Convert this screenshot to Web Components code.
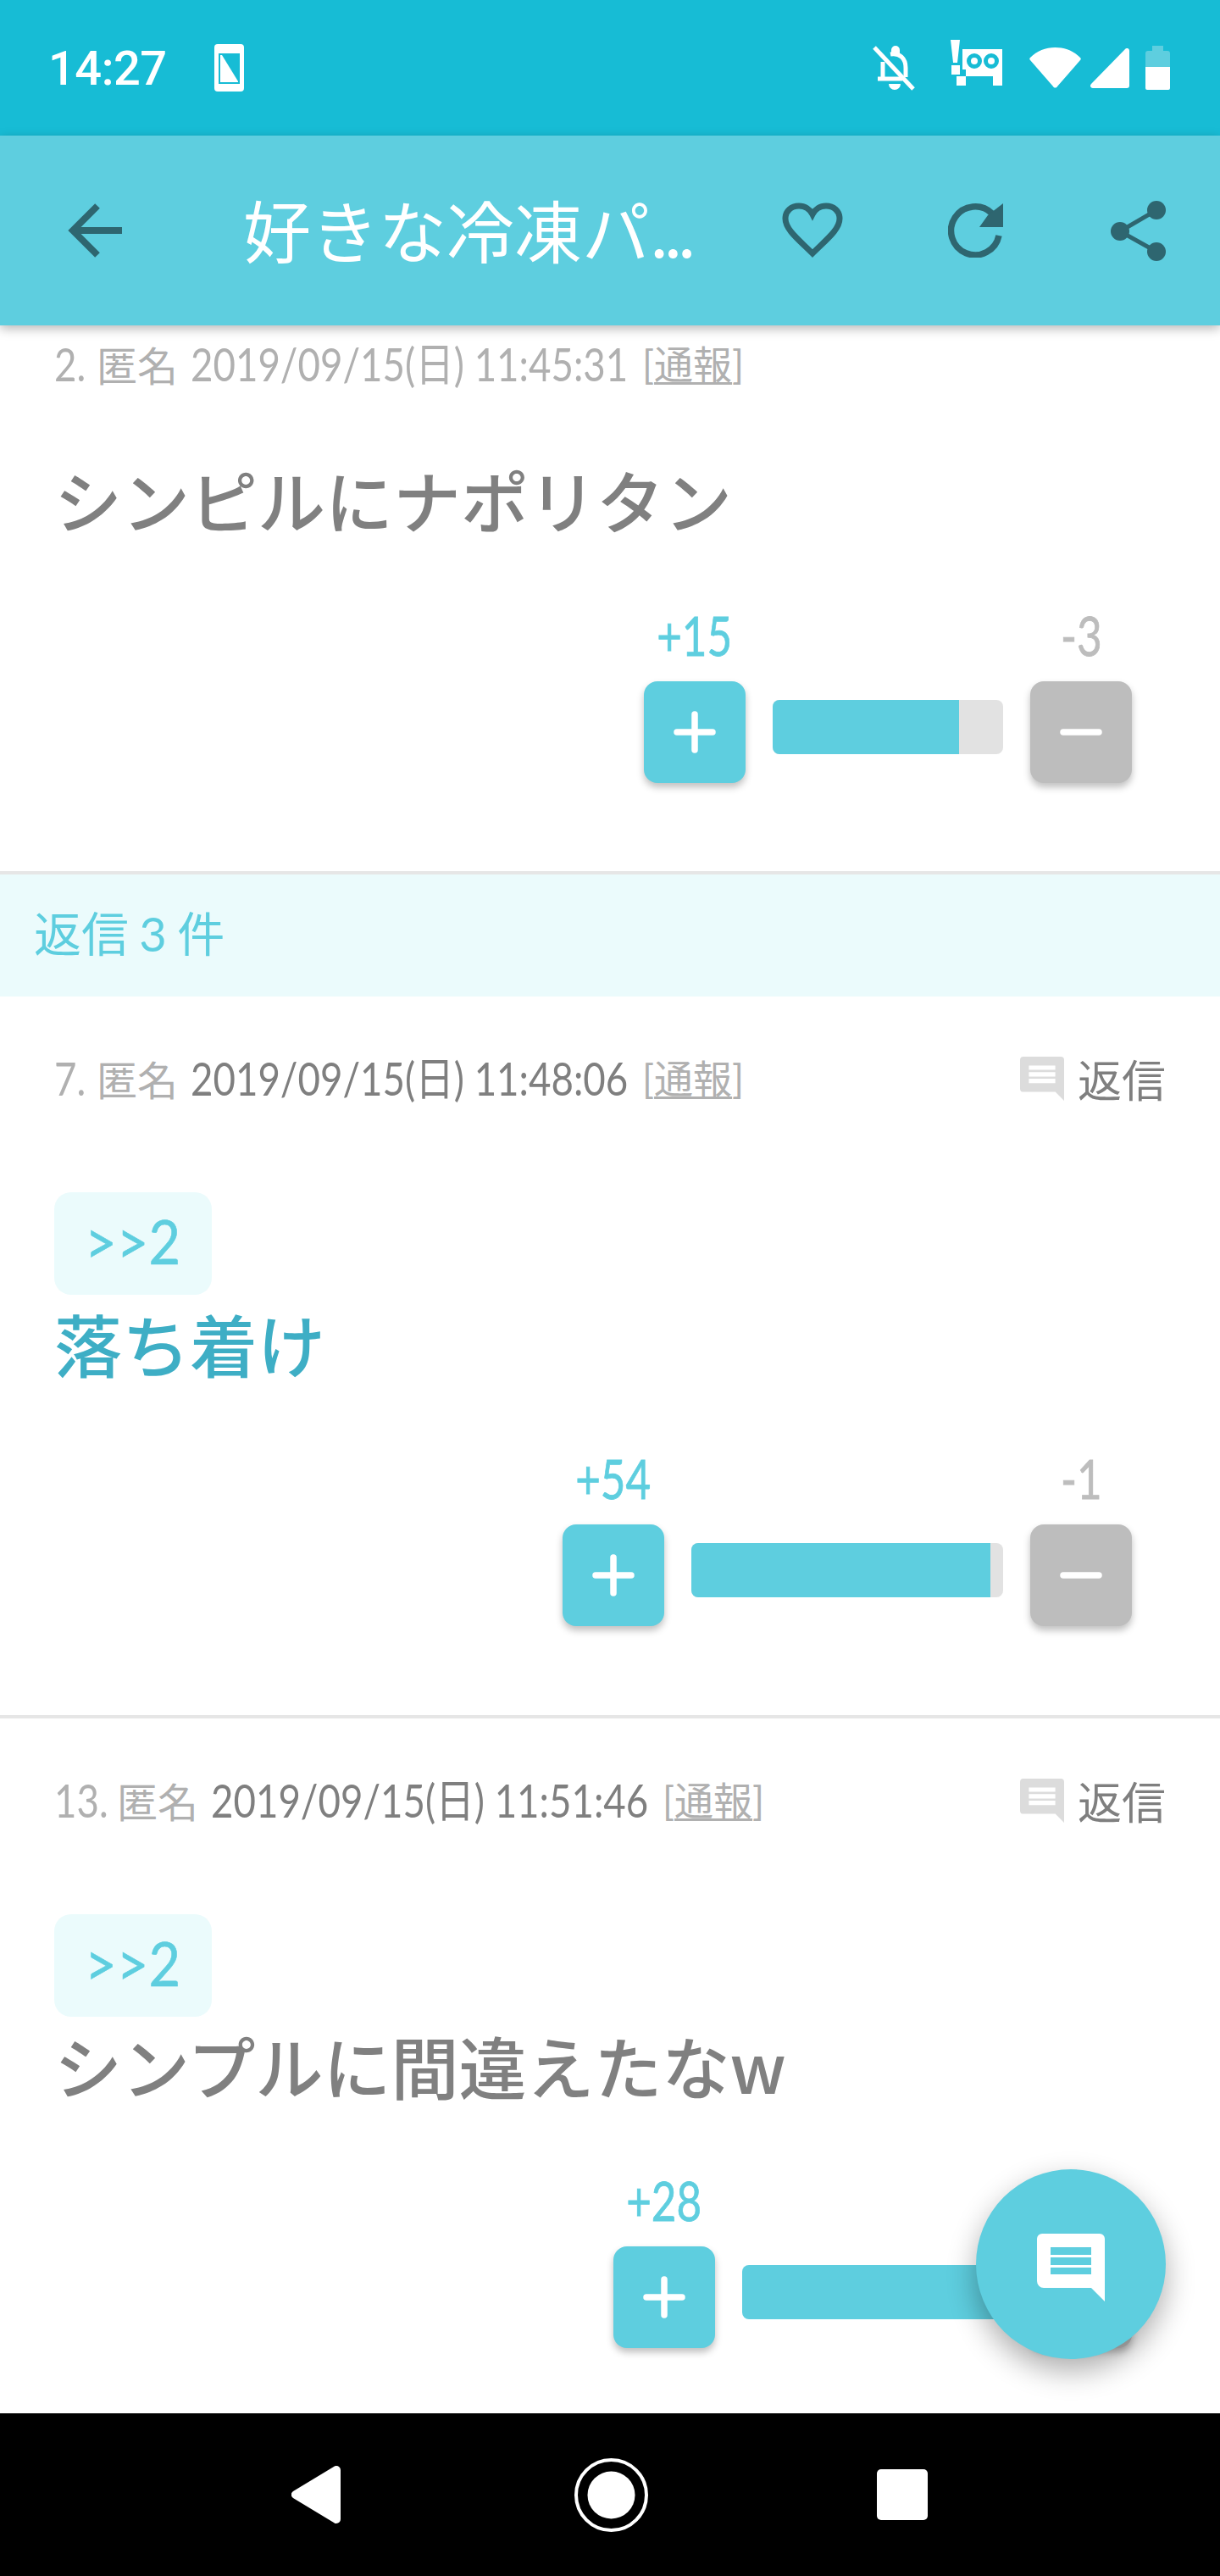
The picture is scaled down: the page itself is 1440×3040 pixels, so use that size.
<!doctype html>
<html lang="ja">
<head>
<meta charset="utf-8">
<title>好きな冷凍パスタ</title>
<style>
  html, body { margin: 0; padding: 0; background: #fff; }
  body { width: 1440px; height: 3040px; overflow: hidden; font-family: "Noto Sans CJK JP", sans-serif; }
</style>
</head>
<body>
<app-screen>
  <status-bar slot="top"></status-bar>
  <title-bar slot="top">好きな冷凍パ<span slot="dots">...</span></title-bar>

  <post-item num="2." stamp="2019/09/15(日) 11:45:31" plus="15" minus="3" meter="272" fill="81" dim-stamp no-reply>
    <span>シンピルにナポリタン</span>
  </post-item>
  <reply-banner>返信 3 件</reply-banner>
  <post-item num="7." stamp="2019/09/15(日) 11:48:06" plus="54" minus="1" meter="368" fill="96" anchor=">>2" accent>
    <span>落ち着け</span>
  </post-item>
  <post-item num="13." stamp="2019/09/15(日) 11:51:46" plus="28" minus="0" meter="308" fill="100" anchor=">>2">
    <span>シンプルに間違えたなw</span>
  </post-item>

  <compose-fab slot="over"></compose-fab>
  <nav-keys slot="bottom"></nav-keys>
</app-screen>

<script>
const TEAL = '#5ecedf'
const LATIN = 'Lato, "Noto Sans CJK JP", sans-serif'

customElements.define('app-screen', class extends HTMLElement {
  constructor() {
    super()
    this.attachShadow({ mode: 'open' }).innerHTML = `
      <style>
        :host { display: flex; flex-direction: column; position: relative; width: 1440px; height: 3040px; overflow: hidden; background: #fff; }
        .top { position: relative; z-index: 2; flex: none; }
        .list { flex: 1; min-height: 0; overflow: hidden; }
        /* the list is scrolled a little: first row slides under the bar */
        .scrolled { margin-top: -51px; }
        .bottom { position: relative; z-index: 4; flex: none; }
      </style>
      <div class="top"><slot name="top"></slot></div>
      <div class="list"><div class="scrolled"><slot></slot></div></div>
      <slot name="over"></slot>
      <div class="bottom"><slot name="bottom"></slot></div>`
  }
})

customElements.define('status-bar', class extends HTMLElement {
  constructor() {
    super()
    this.attachShadow({ mode: 'open' }).innerHTML = `
      <style>
        :host { display: flex; align-items: center; height: 160px; background: #17bcd5; color: #fff; box-sizing: border-box; padding: 0 59px 0 57px; }
        .time { font: 500 56px/1 Roboto, sans-serif; letter-spacing: -.5px; width: 140px; margin-top: 2px; }
        svg { display: block; flex: none; fill: #fff; }
        .phone { margin-left: 56px; }
        .grow { flex: 1; }
        .bell { margin-right: 40px; }
        .dev { margin-right: 32px; margin-top: -12px; }
        .wifi { margin-right: 11px; }
        .signal { margin-right: 19px; }
      </style>
      <span class="time">14:27</span>
      <svg class="phone" width="35" height="56" viewBox="0 0 35 56">
        <path fill-rule="evenodd" d="M4 0h27a4 4 0 0 1 4 4v48a4 4 0 0 1-4 4H4a4 4 0 0 1-4-4V4a4 4 0 0 1 4-4zM5 11v36h25V11z"/>
        <path d="M7 13l2 0 19 31v1H7z"/>
      </svg>
      <span class="grow"></span>
      <svg class="bell" width="52" height="54" viewBox="0 0 52 54">
        <g fill="none" stroke="#fff" stroke-width="5">
          <path d="M2 3l46 49"/>
          <path d="M12 20v19M21 11c11-2 18 5 18 16v11"/>
          <path d="M6 40h29"/>
        </g>
        <path d="M22 6a5 5 0 0 1 10 0v4H22zM19 46h14a7 7 0 0 1-14 0z"/>
      </svg>
      <svg class="dev" width="61" height="54" viewBox="0 0 61 54">
        <path d="M0 0h11l-3 27H3zM1 30h10v11H1z"/>
        <path fill-rule="evenodd" d="M14 11h47v43H50V43H18v-8h-4zM28 16a9 9 0 1 0 0 18 9 9 0 0 0 0-18zM48 16a9 9 0 1 0 0 18 9 9 0 0 0 0-18z"/>
        <path d="M7 43h11v11H7zM28 21a4 4 0 1 1 0 8 4 4 0 0 1 0-8zM48 21a4 4 0 1 1 0 8 4 4 0 0 1 0-8z"/>
      </svg>
      <svg class="wifi" width="61" height="48" viewBox="0 0 61 48">
        <path d="M1 12C9 4 19 0 30.500 0S52 4 60 12c1 1 1 2 0 3L33 46c-1 2-4 2-5 0L1 15c-1-1-1-2 0-3z"/>
      </svg>
      <svg class="signal" width="46" height="47" viewBox="0 0 46 47">
        <path d="M41 1c2-2 5-1 5 2v41a3 3 0 0 1-3 3H3c-3 0-4-3-2-5z"/>
      </svg>
      <svg width="29" height="52" viewBox="0 0 29 52">
        <path fill="${TEAL}" d="M8 0h13v6h5a3 3 0 0 1 3 3v16H0V9a3 3 0 0 1 3-3h5z"/>
        <path d="M0 25h29v25a2 2 0 0 1-2 2H2a2 2 0 0 1-2-2z"/>
      </svg>`
  }
})

customElements.define('title-bar', class extends HTMLElement {
  constructor() {
    super()
    this.attachShadow({ mode: 'open' }).innerHTML = `
      <style>
        :host { display: flex; align-items: center; height: 224px; box-sizing: border-box; padding: 0 64px 0 80px; background: ${TEAL}; box-shadow: 0 4px 12px rgba(0,0,0,.28); color: #fff; }
        svg { display: block; flex: none; }
        h1 { margin: 0 0 6px 143px; flex: 1; font: 400 80px/1 "Noto Sans CJK JP", sans-serif; white-space: nowrap; }
        ::slotted([slot="dots"]) { letter-spacing: -6px; }
        .fav { margin-right: 124px; }
        .reload { margin-right: 127px; }
      </style>
      <svg width="64" height="64" viewBox="0 0 64 64" fill="none" stroke="#2e6670" stroke-width="8"><path d="M64 32H6M35 3 6 32l29 29"/></svg>
      <h1><slot></slot><slot name="dots"></slot></h1>
      <svg class="fav" width="72" height="66" viewBox="0 0 72 66" fill="none" stroke="#2e6670" stroke-width="7"><path d="M36 60 C20 44 4 32 4 19 C4 10 11 4 20 4 C27 4 33 8 36 14 C39 8 45 4 52 4 C61 4 68 10 68 19 C68 32 52 44 36 60z"/></svg>
      <svg class="reload" width="65" height="64" viewBox="0 0 65 64"><path fill="none" stroke="#2e6670" stroke-width="7.500" d="M52 12A28.500 28.500 0 1 0 60 38"/><path fill="#2e6670" d="M65 0v28H37l10-14z"/></svg>
      <svg width="65" height="71" viewBox="0 0 65 71" fill="#2e6670"><path stroke="#2e6670" stroke-width="5" fill="none" d="M54 11 11 36l43 24"/><ellipse cx="54" cy="11" rx="11" ry="11"/><ellipse cx="11" cy="36" rx="11" ry="11"/><ellipse cx="54" cy="60" rx="11" ry="11"/></svg>`
  }
})

customElements.define('reply-banner', class extends HTMLElement {
  constructor() {
    super()
    this.attachShadow({ mode: 'open' }).innerHTML = `
      <style>
        :host { display: flex; align-items: center; height: 144px; box-sizing: border-box; padding: 0 0 4px 40px; background: #ebfbfc; color: ${TEAL}; font: 400 56px/1 ${LATIN}; word-spacing: -2px; }
      </style>
      <slot></slot>`
  }
})

customElements.define('vote-row', class extends HTMLElement {
  constructor() {
    super()
    const meter = this.getAttribute('meter')
    const fill = this.getAttribute('fill')
    const minus = this.getAttribute('minus')
    this.attachShadow({ mode: 'open' }).innerHTML = `
      <style>
        :host { display: flex; justify-content: flex-end; align-items: flex-end; gap: 32px; padding-right: 104px; }
        .side { display: flex; flex-direction: column; align-items: center; width: 120px; }
        /* the digits of the reference are much narrower than any installed face */
        .n { display: block; font: 400 64px/64px ${LATIN}; -webkit-text-stroke: .8px currentColor; transform: scaleX(.8); height: 64px; margin-bottom: 22px; }
        .up .n { color: ${TEAL}; }
        .down .n { color: #bdbdbd; }
        .btn { display: flex; align-items: center; justify-content: center; width: 120px; height: 120px; border-radius: 16px; box-shadow: 0 5px 9px rgba(0,0,0,.25); }
        .up .btn { background: ${TEAL}; }
        .down .btn { background: #bdbdbd; }
        .meter { width: ${meter}px; height: 64px; margin-bottom: 34px; border-radius: 8px; background: #e2e2e2; overflow: hidden; }
        .meter i { display: block; height: 100%; width: ${fill}%; background: ${TEAL}; }
        svg { display: block; }
      </style>
      <div class="side up">
        <span class="n">+${this.getAttribute('plus')}</span>
        <div class="btn"><svg width="50" height="50" viewBox="0 0 50 50" stroke="#fff" stroke-width="7.500" stroke-linecap="round"><path d="M4 25h42M25 4v42"/></svg></div>
      </div>
      <div class="meter"><i></i></div>
      <div class="side down">
        <span class="n">${minus === '0' ? '' : '-' + minus}</span>
        <div class="btn"><svg width="50" height="50" viewBox="0 0 50 50" stroke="#fff" stroke-width="7.500" stroke-linecap="round"><path d="M4 25h42"/></svg></div>
      </div>`
  }
})

customElements.define('post-item', class extends HTMLElement {
  constructor() {
    super()
    const anchor = this.getAttribute('anchor')
    const noReply = this.hasAttribute('no-reply')
    const num = this.getAttribute('num')
    const esc = s => s.replace(/>/g, '&gt;')
    this.attachShadow({ mode: 'open' }).innerHTML = `
      <style>
        :host { display: block; box-sizing: border-box; padding-top: 65px; border-bottom: 4px solid #e6e6e6; }
        .meta { display: flex; align-items: center; height: 64px; padding: 0 64px; font: 400 54px/64px ${LATIN}; color: #7f7f7f; white-space: nowrap; }
        .squeeze { display: block; flex: none; transform: scaleX(.845); transform-origin: left center; }
        .num { width: ${num.length * 24 + 2}px; color: #b0b0b0; }
        .stamp { width: 517px; }
        .name { flex: none; width: 111px; margin-top: -3px; color: #b0b0b0; font: 400 48px/64px "Noto Sans CJK JP", sans-serif; }
        .meta.faint .stamp { color: #b0b0b0; }
        .report { margin-left: 16px; color: #b0b0b0; font: 400 46px/64px ${LATIN}; }
        .report u { text-underline-offset: 4px; text-decoration-thickness: 3px; }
        .reply { display: flex; align-items: center; margin-left: auto; gap: 16px; color: #7f7f7f; font: 400 52px/64px "Noto Sans CJK JP", sans-serif; }
        svg { display: block; }
        .chip { display: flex; align-items: center; justify-content: center; box-sizing: border-box; width: 186px; height: 121px; padding-bottom: 8px; margin: 102px 0 0 64px; border-radius: 20px; background: #ebfbfc; color: ${TEAL}; font: 400 72px/1 ${LATIN}; -webkit-text-stroke: .6px currentColor; }
        .chip span { transform: scaleX(.9); }
        .body { padding-left: 64px; height: 112px; font: 500 80px/112px "Noto Sans CJK JP", sans-serif; color: #808080; white-space: nowrap; }
        .body.first { margin-top: 70px; }
        :host([accent]) .body { color: #3eaec5; }
        vote-row { display: flex; margin-top: 73px; margin-bottom: 105px; }
        .body.first + vote-row { margin-top: 74px; margin-bottom: 104px; }
      </style>
      <div class="meta${this.hasAttribute('dim-stamp') ? ' faint' : ''}">
        <span class="squeeze num">${num}</span><span class="name">匿名</span><span class="squeeze stamp">${this.getAttribute('stamp')}</span>
        <span class="report">[<u>通報</u>]</span>
        ${noReply ? '' : `<span class="reply"><svg width="52" height="52" viewBox="0 0 80 80" fill="#dcdcdc"><path d="M6 0h68a6 6 0 0 1 6 6v74L64 64H6a6 6 0 0 1-6-6V6a6 6 0 0 1 6-6z"/><path fill="#fff" d="M16 16h48v8H16zM16 28h48v8H16zM16 40h48v8H16z"/></svg>返信</span>`}
      </div>
      ${anchor ? `<div class="chip"><span>${esc(anchor)}</span></div>` : ''}
      <div class="body${anchor ? '' : ' first'}"><slot></slot></div>
      <vote-row plus="${this.getAttribute('plus')}" minus="${this.getAttribute('minus')}" meter="${this.getAttribute('meter')}" fill="${this.getAttribute('fill')}"></vote-row>`
  }
})

customElements.define('compose-fab', class extends HTMLElement {
  constructor() {
    super()
    this.attachShadow({ mode: 'open' }).innerHTML = `
      <style>
        :host { position: absolute; z-index: 3; left: 1152px; top: 2560px; display: flex; align-items: center; justify-content: center; width: 224px; height: 224px; border-radius: 50%; background: ${TEAL}; box-shadow: 0 14px 34px rgba(0,0,0,.32); }
        svg { display: block; margin-top: 8px; }
      </style>
      <svg width="80" height="80" viewBox="0 0 80 80" fill="#fff"><path d="M6 0h68a6 6 0 0 1 6 6v74L64 64H8a8 8 0 0 1-8-8V6a6 6 0 0 1 6-6z"/><path fill="${TEAL}" d="M16 16h48v9H16zM16 28h48v9H16zM16 40h48v8H16z"/></svg>`
  }
})

customElements.define('nav-keys', class extends HTMLElement {
  constructor() {
    super()
    this.attachShadow({ mode: 'open' }).innerHTML = `
      <style>
        :host { display: flex; align-items: center; justify-content: center; height: 192px; background: #000; padding-right: 2px; }
        svg { display: block; flex: none; }
        .back { margin-right: 276px; }
        .home { margin-right: 270px; }
      </style>
      <svg class="back" width="58" height="68" viewBox="0 0 58 68" fill="#fff"><path d="M53 0a5 5 0 0 1 5 5v58a5 5 0 0 1-5 5c-1 0-2 0-3-1L2 38c-3-2-3-6 0-8L50 1c1-1 2-1 3-1z"/></svg>
      <svg class="home" width="87" height="87" viewBox="0 0 87 87"><circle cx="43.500" cy="43.500" r="41.500" fill="none" stroke="#fff" stroke-width="4"/><circle cx="43.500" cy="43.500" r="28" fill="#fff"/></svg>
      <svg width="60" height="60" viewBox="0 0 60 60"><rect width="60" height="60" rx="5" fill="#fff"/></svg>`
  }
})
</script>
</body>
</html>
